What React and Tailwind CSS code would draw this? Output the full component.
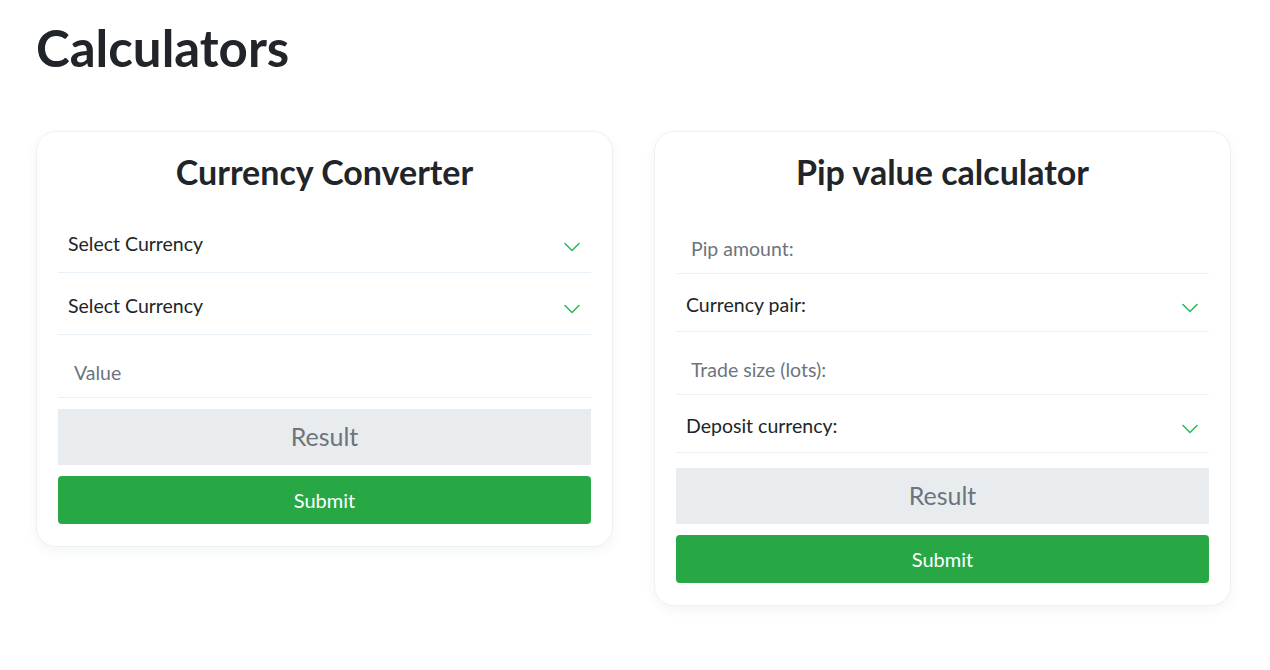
import React from "react";

const Chevron = () => (
  <svg width="16" height="10" viewBox="0 0 16 10" fill="none" className="shrink-0">
    <path d="M1 1.5L8 8.5L15 1.5" stroke="#2dbb5d" strokeWidth="1.6" strokeLinecap="round" strokeLinejoin="round" />
  </svg>
);

const SelectRow = ({ label, h }) => (
  <div className={`flex items-center justify-between border-b border-[#e8f1f6] pl-[10px] pr-[11px] ${h}`}>
    <span className="text-[19.5px] text-[#212529] pt-[4px]">{label}</span>
    <span className="pt-[10px]">
      <Chevron />
    </span>
  </div>
);

const InputRow = ({ placeholder, h, pl }) => (
  <div className={`flex items-center border-b border-[#e8f1f6] ${pl} ${h}`}>
    <span className="text-[19.5px] text-[#6c757d] pt-[14px]">{placeholder}</span>
  </div>
);

const Card = ({ title, gap, children }) => (
  <div className="w-[577px] rounded-[20px] border border-[#eef1f4] bg-white px-[21px] pb-[22px] pt-[17px] shadow-[0_4px_12px_rgba(30,60,90,0.06)]">
    <h2 className="text-center text-[34px] font-bold text-[#212529] leading-[46px] mb-[16px]">{title}</h2>
    {children}
    <div className={`${gap} flex h-[56px] items-center justify-center bg-[#e9ecef] text-[25px] text-[#6c757d]`}>
      Result
    </div>
    <button className="mt-[11px] flex h-[48px] w-full items-center justify-center rounded-[4px] bg-[#28a745] text-[20px] text-white">
      Submit
    </button>
  </div>
);

export default function App() {
  return (
    <div className="min-h-screen bg-white px-[36px] pt-[16px] font-['Lato',sans-serif]">
      <h1 className="text-[51px] font-bold text-[#212529] leading-[64px]">Calculators</h1>

      <div className="mt-[51px] flex items-start gap-[41px]">
        <Card title="Currency Converter" gap="mt-[11px]">
          <SelectRow label="Select Currency" h="h-[62px]" />
          <SelectRow label="Select Currency" h="h-[62px]" />
          <InputRow placeholder="Value" h="h-[63px]" pl="pl-[16px]" />
        </Card>

        <Card title="Pip value calculator" gap="mt-[15px]">
          <InputRow placeholder="Pip amount:" h="h-[63px]" pl="pl-[15px]" />
          <SelectRow label="Currency pair:" h="h-[58px]" />
          <InputRow placeholder="Trade size (lots):" h="h-[63px]" pl="pl-[15px]" />
          <SelectRow label="Deposit currency:" h="h-[58px]" />
        </Card>
      </div>
    </div>
  );
}
